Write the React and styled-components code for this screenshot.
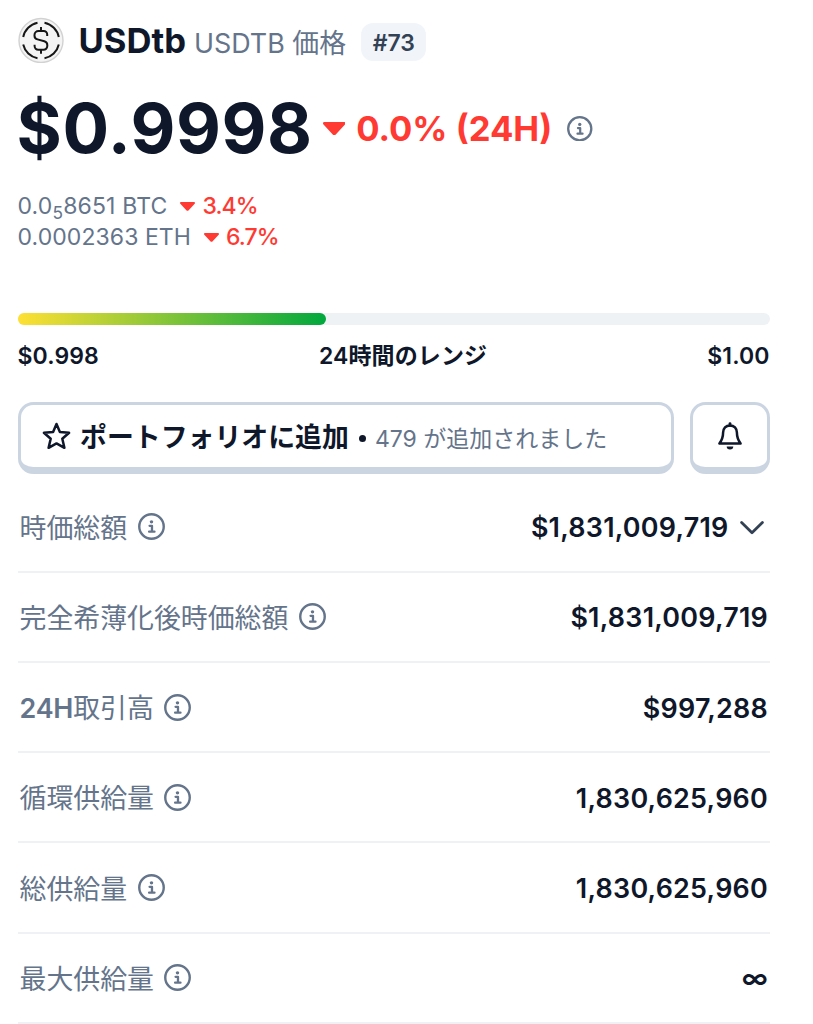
import React from 'react';
import styled, { createGlobalStyle } from 'styled-components';

const GlobalStyles = createGlobalStyle`
  * {
    box-sizing: border-box;
  }

  body {
    margin: 0;
    background: #fff;
    color: #0f172a;
    font-family: Inter, 'Noto Sans CJK JP', sans-serif;
  }
`;

const Page = styled.main`
  width: 813px;
  height: 1024px;
  padding: 17px 43.5px 0 17.5px;
  overflow: hidden;
`;

const Header = styled.header`
  display: flex;
  align-items: center;
  height: 46px;

  svg {
    flex: none;
    margin-right: 15px;
  }
`;

const Title = styled.h1`
  margin: 2px 0 0;
  font-size: 34.6px;
  font-weight: 700;
  line-height: 46px;
  white-space: nowrap;
`;

const Symbol = styled.span`
  margin-left: 8px;
  color: #64748b;
  font-size: 26.9px;
  font-weight: 400;
`;

const Rank = styled.span`
  height: 38px;
  margin: 4px 0 0 15px;
  padding: 1px 11.5px 0;
  border-radius: 12px;
  background: #f1f5f9;
  color: #334155;
  font-size: 23px;
  font-weight: 600;
  line-height: 38px;
`;

const PriceRow = styled.div`
  display: flex;
  align-items: center;
  height: 77px;
  margin-top: 27px;
`;

const Price = styled.span`
  margin-left: -1px;
  font-size: 69.2px;
  font-weight: 700;
  line-height: 77px;
  letter-spacing: 0.6px;
`;

const Change = styled.span`
  display: flex;
  align-items: center;
  margin-left: ${({ $large }) => ($large ? '10px' : '13px')};
  color: #ff3a33;
  font-size: ${({ $large }) => ($large ? '34.6px' : '23px')};
  font-weight: ${({ $large }) => ($large ? 700 : 500)};
  letter-spacing: ${({ $large }) => ($large ? '0' : '-0.9px')};
  line-height: 1;

  svg {
    margin-right: ${({ $large }) => ($large ? '11px' : '7px')};
  }
`;

const InfoSvg = styled.svg`
  flex: none;
  margin-left: ${({ $gap }) => $gap}px;
  color: #64748b;
`;

const Conversions = styled.div`
  margin-top: 24px;
`;

const Conversion = styled.div`
  display: flex;
  align-items: center;
  height: 30.7px;
  color: #64748b;
  font-size: 23px;
  letter-spacing: ${({ $spacing }) => $spacing};
  white-space: nowrap;

  sub {
    font-size: 17.3px;
    line-height: 0;
    vertical-align: baseline;
    position: relative;
    bottom: -4.3px;
  }
`;

const Track = styled.div`
  height: 12px;
  margin-top: 60.5px;
  border-radius: 6px;
  background: #eff2f5;
`;

const Fill = styled.div`
  height: 100%;
  border-radius: 6px;
  background: linear-gradient(90deg, #ffe033, #00a83e);
`;

const RangeLabels = styled.div`
  display: flex;
  justify-content: space-between;
  margin-top: 16px;
  font-size: 23px;
  font-weight: 600;
  line-height: 31px;
  letter-spacing: 0.1px;
`;

const Actions = styled.div`
  display: flex;
  gap: 16px;
  margin-top: 30px;
`;

const Button = styled.button`
  display: flex;
  align-items: center;
  justify-content: ${({ $wide }) => ($wide ? 'flex-start' : 'center')};
  flex: ${({ $wide }) => ($wide ? '1' : '0 0 79.5px')};
  height: 72.5px;
  padding: 0 ${({ $wide }) => ($wide ? '21px' : '0')};
  border: 3.84px solid #cbd5e1;
  border-bottom-width: 7.7px;
  border-radius: 15.4px;
  background: #fff;
  color: #0f172a;
  font-family: inherit;
  font-size: 26.9px;
  font-weight: 600;
  white-space: nowrap;

  svg {
    flex: none;
  }
`;

const ButtonText = styled.span`
  margin: -2px 0 0 9.500px;
`;

const Dot = styled.span`
  display: inline-block;
  width: 7px;
  height: 7px;
  margin: 0 9px 0 10px;
  border-radius: 50%;
  background: currentColor;
  vertical-align: 5px;
`;

const Added = styled.span`
  color: #64748b;
  font-size: 23px;
  font-weight: 400;
`;

const Stats = styled.div`
  margin-top: 8px;
`;

const StatRow = styled.div`
  display: flex;
  align-items: center;
  justify-content: space-between;
  height: 90.25px;
  padding: 0 1.5px 0 2px;
  border-bottom: 2px solid #eff2f5;
  font-size: 26.9px;
`;

const StatLabel = styled.span`
  display: flex;
  align-items: center;
  color: #64748b;
  font-weight: 400;
`;

const LabelText = styled.span`
  margin-top: -1px;

  b {
    font-weight: 600;
    letter-spacing: -0.2px;
  }
`;

const StatValue = styled.span`
  display: flex;
  align-items: center;
  padding-top: 1px;
  font-weight: 600;
  letter-spacing: 0.24px;

  svg {
    margin: 2px 4px 0 11.500px;
  }
`;

const Info = ({ size = 27, gap = 10.5 }) => (
  <InfoSvg $gap={gap} width={size} height={size} viewBox="0 0 28 28" fill="none">
    <circle cx="14" cy="14" r="12.7" stroke="currentColor" strokeWidth="2.5" />
    <circle cx="14" cy="9.2" r="1.8" fill="currentColor" />
    <path d="M12 13.300h2.500v5.700M11.500 19.400h5.600" stroke="currentColor" strokeWidth="2.400" strokeLinecap="round" strokeLinejoin="round" />
  </InfoSvg>
);

const Caret = ({ width }) => (
  <svg width={width} height={width * 0.6} viewBox="0 0 22 13" fill="currentColor">
    <path d="M1.3 0h19.4c1.3 0 1.7 1.5.8 2.3l-8.800 9.600a2.300 2.300 0 0 1-3.400 0L.5 2.300C-.4 1.500 0 0 1.300 0Z" />
  </svg>
);

const Logo = () => (
  <svg width="46" height="46" viewBox="0 0 46 46" fill="none">
    <circle cx="23" cy="23.500" r="22" fill="#f4f4f4" stroke="#d2d2d2" strokeWidth="1.400" />
    <g stroke="#161616" strokeWidth="2">
      <path d="M26.500 5.700A18.200 18.200 0 0 1 40.800 20M40.800 27.500A18.200 18.200 0 0 1 26.500 41.300M19.500 41.300A18.200 18.200 0 0 1 5.200 27.500M5.200 20A18.200 18.200 0 0 1 19.500 5.700" />
      <path d="M29.200 19v-1.500a3.500 3.500 0 0 0-3.500-3.500h-5.200a4 4 0 0 0-4 4v.7c0 2 1.200 3.200 3 3.700l6.800 1.900c1.900.5 3 1.800 3 3.700v1a3.800 3.800 0 0 1-3.800 3.800h-5.200a3.700 3.700 0 0 1-3.700-3.700v-1.400M23 10v4M23 32.800v4" />
    </g>
  </svg>
);

const Star = () => (
  <svg width="29" height="28" viewBox="0 0 29 28" fill="none">
    <path
      d="m14.500 2 3.400 8 9.200.8-6.800 6 2.100 9-7.900-4.400-7.900 4.400 2.100-9-6.800-6 9.200-.8Z"
      stroke="currentColor"
      strokeWidth="2.500"
      strokeLinejoin="round"
    />
  </svg>
);

const Bell = () => (
  <svg width="26" height="28" viewBox="0 0 26 28" fill="none">
    <path
      d="M13 3.400c-4.100 0-6.900 3-6.900 7.200 0 4.600-1.400 8-3.700 11h21.200c-2.300-3-3.700-6.400-3.700-11 0-4.200-2.800-7.200-6.900-7.200Z"
      stroke="currentColor"
      strokeWidth="2.500"
      strokeLinejoin="round"
    />
    <path d="M13 1.600v2" stroke="currentColor" strokeWidth="2.800" strokeLinecap="round" />
    <path d="M9.700 24.600h6.600a3.300 3 0 0 1-6.600 0Z" fill="currentColor" />
  </svg>
);

const Chevron = () => (
  <svg width="24" height="14" viewBox="0 0 24 14" fill="none">
    <path d="m1.600 1.600 10.400 10.200L22.400 1.600" stroke="#334155" strokeWidth="2.800" strokeLinecap="round" strokeLinejoin="round" />
  </svg>
);

const stats = [
  { label: '時価総額', value: '$1,831,009,719', expandable: true },
  { label: '完全希薄化後時価総額', value: '$1,831,009,719' },
  { prefix: '24H', label: '取引高', value: '$997,288' },
  { label: '循環供給量', value: '1,830,625,960' },
  { label: '総供給量', value: '1,830,625,960' },
  { label: '最大供給量', value: '∞' },
];

const rangePercent = 41;

const App = () => {
  return (
    <Page>
      <GlobalStyles />
      <Header>
        <Logo />
        <Title>
          USDtb<Symbol>USDTB 価格</Symbol>
        </Title>
        <Rank>#73</Rank>
      </Header>

      <PriceRow>
        <Price>$0.9998</Price>
        <Change $large>
          <Caret width={22.5} />
          0.0% (24H)
        </Change>
        <Info size={25.5} gap={15} />
      </PriceRow>

      <Conversions>
        <Conversion $spacing="0.16px">
          <span>
            0.0<sub>5</sub>8651 BTC
          </span>
          <Change>
            <Caret width={15} />
            3.4%
          </Change>
        </Conversion>
        <Conversion $spacing="0.08px">
          <span>0.0002363 ETH</span>
          <Change>
            <Caret width={15} />
            6.7%
          </Change>
        </Conversion>
      </Conversions>

      <Track>
        <Fill style={{ width: `${rangePercent}%` }} />
      </Track>
      <RangeLabels>
        <span>$0.998</span>
        <span>24時間のレンジ</span>
        <span>$1.00</span>
      </RangeLabels>

      <Actions>
        <Button $wide>
          <Star />
          <ButtonText>
            ポートフォリオに追加
            <Dot />
            <Added>479 が追加されました</Added>
          </ButtonText>
        </Button>
        <Button>
          <Bell />
        </Button>
      </Actions>

      <Stats>
        {stats.map(({ prefix, label, value, expandable }) => (
          <StatRow key={label}>
            <StatLabel>
              <LabelText>
                {prefix && <b>{prefix}</b>}
                {label}
              </LabelText>
              <Info />
            </StatLabel>
            <StatValue>
              {value}
              {expandable && <Chevron />}
            </StatValue>
          </StatRow>
        ))}
      </Stats>
    </Page>
  );
};

export default App;
